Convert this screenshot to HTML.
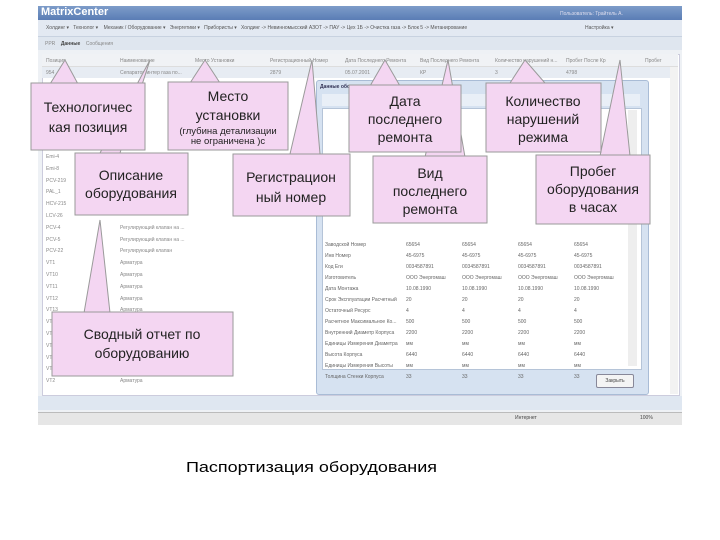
<!DOCTYPE html>
<html><head><meta charset="utf-8"><style>
body{margin:0;width:720px;height:540px;background:#fff;position:relative;overflow:hidden;font-family:"Liberation Sans","DejaVu Sans",sans-serif}
.a{position:absolute}
.t{font-size:5px;color:#888;white-space:nowrap}
.l{line-height:11.8px}
</style></head><body>
<div class="a" style="left:38px;top:6px;width:644px;height:419px;background:#eef1f5"></div>
<div class="a" style="left:38px;top:6px;width:644px;height:14px;background:linear-gradient(#7d9cc9,#5a7db5)"></div>
<div class="a" style="left:41px;top:6px;font:bold 11px 'Liberation Sans',sans-serif;color:#fff">MatrixCenter</div>
<div class="a t" style="left:560px;top:11px;color:#dde">Пользователь: Трайтель А.</div>
<div class="a" style="left:38px;top:20px;width:644px;height:16px;background:#e3e9f2;border-bottom:1px solid #c8d2e0"></div>
<div class="a t" style="left:46px;top:25px;color:#555">Холдинг ▾ &nbsp; Технолог ▾ &nbsp;&nbsp; Механик / Оборудование ▾ &nbsp; Энергетики ▾ &nbsp; Прибористы ▾ &nbsp; Холдинг -&gt; Невинномысский АЗОТ -&gt; ПАУ -&gt; Цех 1Б -&gt; Очистка газа -&gt; Блок 5 -&gt; Метанирование</div>
<div class="a t" style="left:585px;top:25px;color:#555">Настройка ▾</div>
<div class="a" style="left:38px;top:37px;width:644px;height:13px;background:#dfe6ef"></div>
<div class="a t" style="left:45px;top:41px">PPR &nbsp;&nbsp; <b style="color:#444">Данные</b> &nbsp;&nbsp; Сообщения</div>
<div class="a" style="left:42px;top:54px;width:636px;height:340px;background:#fff;border:1px solid #ccd"></div>
<div class="a" style="left:42px;top:54px;width:636px;height:12px;background:#f0f2f5;border-bottom:1px solid #ddd"></div>
<div class="a t" style="left:46px;top:58px">Позиция</div><div class="a t" style="left:120px;top:58px">Наименование</div><div class="a t" style="left:195px;top:58px">Место Установки</div><div class="a t" style="left:270px;top:58px">Регистрационный Номер</div><div class="a t" style="left:345px;top:58px">Дата Последнего Ремонта</div><div class="a t" style="left:420px;top:58px">Вид Последнего Ремонта</div><div class="a t" style="left:495px;top:58px">Количество нарушений н...</div><div class="a t" style="left:566px;top:58px">Пробег После Кр</div><div class="a t" style="left:645px;top:58px">Пробег</div>
<div class="a" style="left:42px;top:67px;width:636px;height:11px;background:#e7ecf3"></div>
<div class="a t" style="left:46px;top:70px">954</div><div class="a t" style="left:120px;top:70px">Сепаратор интер газа по...</div><div class="a t" style="left:270px;top:70px">2879</div><div class="a t" style="left:345px;top:70px">05.07.2001</div><div class="a t" style="left:420px;top:70px">КР</div><div class="a t" style="left:495px;top:70px">3</div><div class="a t" style="left:566px;top:70px">4798</div>
<div class="a t l" style="left:46px;top:152px">Emi-4<br>Emi-8<br>PCV-219<br>PAL_1<br>HCV-215<br>LCV-26<br>PCV-4<br>PCV-5<br>PCV-22<br>VT1<br>VT10<br>VT11<br>VT12<br>VT13<br>VT<br>VT<br>VT<br>VT<br>VT<br>VT2</div>
<div class="a t l" style="left:120px;top:152px"><br>Цех 1Б<br><br><br><br><br>Регулирующий клапан на ...<br>Регулирующий клапан на ...<br>Регулирующий клапан<br>Арматура<br>Арматура<br>Арматура<br>Арматура<br>Арматура<br><br><br><br><br><br>Арматура</div>
<div class="a" style="left:670px;top:67px;width:8px;height:327px;background:#f2f2f2"></div>
<div class="a" style="left:38px;top:396px;width:644px;height:14px;background:#dfe7f1"></div>
<div class="a" style="left:38px;top:412px;width:644px;height:12px;background:#e6e6e6;border-top:1px solid #bbb"></div>
<div class="a t" style="left:515px;top:415px;color:#444">Интернет</div><div class="a t" style="left:640px;top:415px;color:#444">100%</div>
<div class="a" style="left:316px;top:80px;width:331px;height:313px;background:#d6e2f1;border:1px solid #a9bcd6;border-radius:3px"></div>
<div class="a t" style="left:320px;top:84px;color:#335;font-weight:bold">Данные оборудования</div>
<div class="a" style="left:322px;top:94px;width:318px;height:12px;background:#e9eff7"></div>
<div class="a" style="left:322px;top:108px;width:318px;height:260px;background:#fff;border:1px solid #b5c4d8"></div>
<div class="a t" style="left:325px;top:240px;line-height:11px;color:#666">Заводской Номер<br>Инв Номер<br>Код Еги<br>Изготовитель<br>Дата Монтажа<br>Срок Эксплуатации Расчетный<br>Остаточный Ресурс<br>Расчетное Максимальное Ко...<br>Внутренний Диаметр Корпуса<br>Единицы Измерения Диаметра<br>Высота Корпуса<br>Единицы Измерения Высоты<br>Толщина Стенки Корпуса</div>
<div class="a t" style="left:406px;top:240px;line-height:11px;color:#666">65654<br>45-6975<br>0034587891<br>ООО Энергомаш<br>10.08.1990<br>20<br>4<br>500<br>2200<br>мм<br>6440<br>мм<br>33</div>
<div class="a t" style="left:462px;top:240px;line-height:11px;color:#666">65654<br>45-6975<br>0034587891<br>ООО Энергомаш<br>10.08.1990<br>20<br>4<br>500<br>2200<br>мм<br>6440<br>мм<br>33</div>
<div class="a t" style="left:518px;top:240px;line-height:11px;color:#666">65654<br>45-6975<br>0034587891<br>ООО Энергомаш<br>10.08.1990<br>20<br>4<br>500<br>2200<br>мм<br>6440<br>мм<br>33</div>
<div class="a t" style="left:574px;top:240px;line-height:11px;color:#666">65654<br>45-6975<br>0034587891<br>ООО Энергомаш<br>10.08.1990<br>20<br>4<br>500<br>2200<br>мм<br>6440<br>мм<br>33</div>
<div class="a" style="left:628px;top:110px;width:9px;height:256px;background:#eee"></div>
<div class="a" style="left:596px;top:374px;width:36px;height:12px;background:#f4f4f4;border:1px solid #889;border-radius:2px;font-size:5px;color:#444;text-align:center;line-height:12px">Закрыть</div>
<svg class="a" style="left:0;top:0" width="720" height="540" font-family="Liberation Sans, DejaVu Sans, sans-serif" font-size="14" fill="#222" text-anchor="middle">
<g fill="#f4d6f2" stroke="#9a9a9a" stroke-width="1">
<polygon points="50,84 65,60 78,84"/>
<polygon points="100,153 150,60 120,153"/>
<polygon points="190,83 205,60 220,83"/>
<polygon points="290,154 312,60 320,154"/>
<polygon points="370,86 385,60 400,86"/>
<polygon points="425,157 448,60 465,157"/>
<polygon points="510,83 525,60 545,83"/>
<polygon points="600,156 620,60 630,156"/>
<polygon points="84,313 100,220 110,313"/>
<rect x="31" y="83" width="114" height="67"/>
<rect x="168" y="82" width="120" height="68"/>
<rect x="349" y="85" width="112" height="67"/>
<rect x="486" y="83" width="115" height="69"/>
<rect x="75" y="153" width="113" height="62"/>
<rect x="233" y="154" width="117" height="62"/>
<rect x="373" y="156" width="114" height="67"/>
<rect x="536" y="155" width="114" height="69"/>
<rect x="52" y="312" width="181" height="64"/>
</g>
<text x="88" y="112">Технологичес</text><text x="88" y="132">кая позиция</text>
<text x="228" y="101">Место</text><text x="228" y="120">установки</text>
<text x="228" y="134" font-size="9.5">(глубина детализации</text><text x="228" y="144" font-size="9.5">не ограничена )с</text>
<text x="405" y="106">Дата</text><text x="405" y="124">последнего</text><text x="405" y="142">ремонта</text>
<text x="543" y="106">Количество</text><text x="543" y="124">нарушений</text><text x="543" y="142">режима</text>
<text x="131" y="180">Описание</text><text x="131" y="198">оборудования</text>
<text x="291" y="182">Регистрацион</text><text x="291" y="202">ный номер</text>
<text x="430" y="178">Вид</text><text x="430" y="196">последнего</text><text x="430" y="214">ремонта</text>
<text x="593" y="176">Пробег</text><text x="593" y="194">оборудования</text><text x="593" y="212">в часах</text>
<text x="142" y="339">Сводный отчет по</text><text x="142" y="358">оборудованию</text>
<text x="311.5" y="472" font-size="15" fill="#000" textLength="251" lengthAdjust="spacingAndGlyphs">Паспортизация оборудования</text>
</svg>
</body></html>
